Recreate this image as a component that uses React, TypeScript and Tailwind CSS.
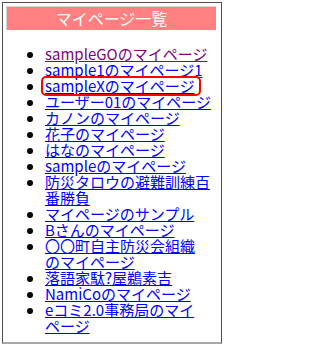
const items: { label: string[]; visited?: boolean; marked?: boolean }[] = [
  { label: ["sampleGOのマイページ"], visited: true },
  { label: ["sample1のマイページ1"] },
  { label: ["sampleXのマイページ"], marked: true },
  { label: ["ユーザー01のマイページ"] },
  { label: ["カノンのマイページ"] },
  { label: ["花子のマイページ"] },
  { label: ["はなのマイページ"] },
  { label: ["sampleのマイページ"] },
  { label: ["防災タロウの避難訓練百番勝負"] },
  { label: ["マイページのサンプル"] },
  { label: ["Bさんのマイページ"] },
  { label: ["〇〇町自主防災会組織", "のマイページ"] },
  { label: ["落語家駄?屋鵜素吉"] },
  { label: ["NamiCoのマイページ"] },
  { label: ["eコミ2.0事務局のマイ", "ページ"] },
];

export default function App() {
  return (
    <div className="w-[225px] h-[347px] bg-white pt-[2px] pl-[2px] font-['Noto_Sans_CJK_JP','Liberation_Sans',sans-serif]">
      <div className="w-[220px] h-[342px] border border-[#505050] border-b-2 border-b-[#a8a8a8] pt-[3px] pl-[3px] pr-[5px]">
        {/* title bar */}
        <div className="h-[24px] bg-[#ff8080] border-t border-l border-[#d4d4d4] text-white text-center text-[16px] leading-[22px]">
          マイページ一覧
        </div>

        <ul className="mt-[16px] pl-[39px] list-disc text-[15px] leading-[16px] text-black">
          {items.map((item, i) => (
            <li key={i} className="relative">
              <a
                href="#"
                className={
                  item.visited
                    ? "text-[#800080] underline underline-offset-[1px]"
                    : "text-[#0000ff] underline underline-offset-[1px]"
                }
              >
                {item.label.map((part, j) => (
                  <span key={j}>
                    {j > 0 && <br />}
                    {part}
                  </span>
                ))}
              </a>
              {item.marked && (
                <span className="absolute left-[-4px] top-[-2px] w-[160px] h-[20px] border-2 border-[#ff0000] rounded-[5px] pointer-events-none" />
              )}
            </li>
          ))}
        </ul>
      </div>
    </div>
  );
}
